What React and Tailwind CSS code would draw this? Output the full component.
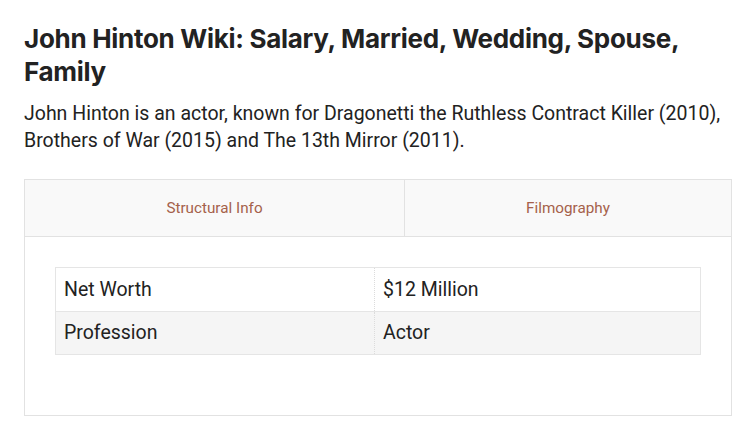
import React from 'react';

const rows = [
  { label: 'Net Worth', value: '$12 Million' },
  { label: 'Profession', value: 'Actor' },
];

export default function App() {
  return (
    <div className="w-[750px] h-[432px] bg-white px-6 pt-[22px] text-[#222]">
      {/* ── Heading ── */}
      <h1 className="font-['Inter',sans-serif] font-bold text-[26px] leading-[33px] tracking-[-0.3px] text-[#222] pr-6">
        John Hinton Wiki: Salary, Married, Wedding, Spouse, Family
      </h1>
      <p className="mt-[12px] font-['Roboto',sans-serif] text-[19.5px] leading-[27px] text-[#222]">
        John Hinton is an actor, known for Dragonetti the Ruthless Contract Killer (2010), Brothers of War (2015) and The 13th Mirror (2011).
      </p>

      {/* ── Tabs ── */}
      <div className="mt-[25px] w-[708px] border border-[#e2e2e2]">
        <div className="flex h-[57px] bg-[#f9f9f9] border-b border-[#e2e2e2] font-['Roboto',sans-serif] text-[15.25px] text-[#a5614b]">
          <div className="w-[380px] flex items-center justify-center border-r border-[#e2e2e2]">Structural Info</div>
          <div className="flex-1 flex items-center justify-center">Filmography</div>
        </div>

        <div className="px-[30px] pt-[30px] pb-[60px]">
          <div className="border border-[#e5e5e5] font-['Roboto',sans-serif] text-[19.5px] text-[#222]">
            {rows.map((r, i) => (
              <div
                key={r.label}
                className={`flex h-[43px] items-center ${i % 2 ? 'bg-[#f5f5f5] border-t border-[#e5e5e5]' : 'bg-white'}`}
              >
                <div className="w-[319px] h-full flex items-center pl-[8px] border-r border-dotted border-[#dcdcdc]">{r.label}</div>
                <div className="flex-1 pl-[8px]">{r.value}</div>
              </div>
            ))}
          </div>
        </div>
      </div>
    </div>
  );
}
